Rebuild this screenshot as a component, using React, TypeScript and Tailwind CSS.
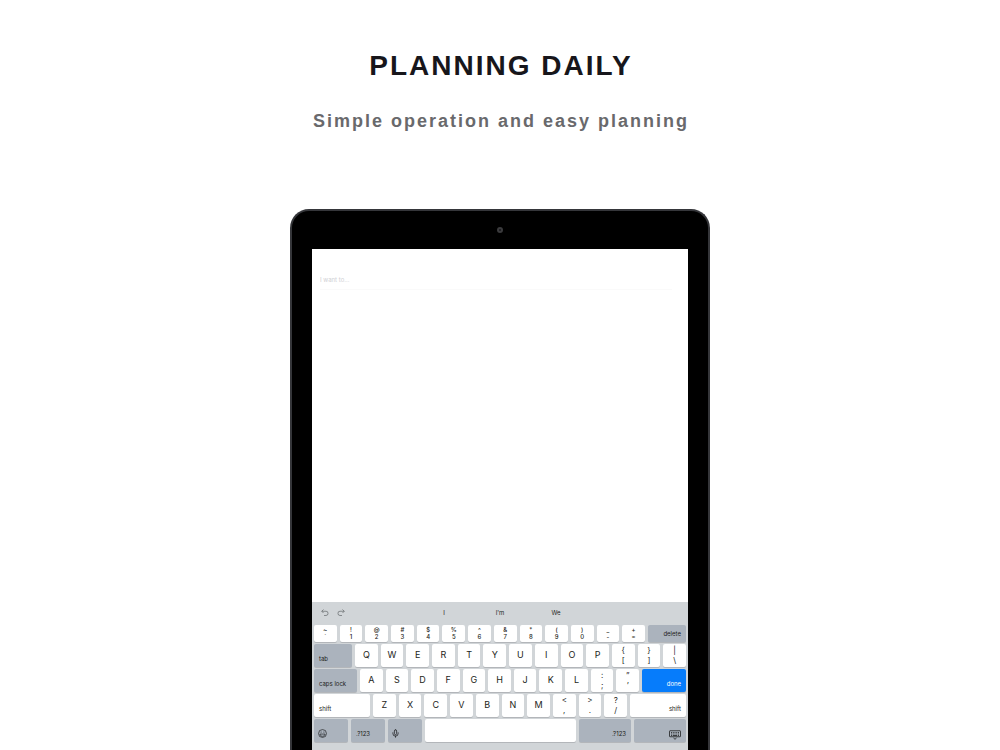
import type { ReactNode } from "react";
import { Mic } from "lucide-react";

type KeyProps = {
  label: string;
  children?: ReactNode;
  className?: string;
};

const LIGHT = "bg-white";
const GRAY = "bg-[#abb3bd]";

function Key({ label, children, className = "" }: KeyProps) {
  return (
    <button
      type="button"
      aria-label={label}
      className={`flex h-full rounded-[2px] shadow-[0_1px_0_#b3b6ba] ${className}`}
    >
      {children}
    </button>
  );
}

function LetterKey({ letter }: { letter: string }) {
  return (
    <Key
      label={letter}
      className={`min-w-0 flex-1 items-center justify-center pb-[2px] text-[9px] ${LIGHT}`}
    >
      {letter}
    </Key>
  );
}

function DualKey({ top, bottom, small = false }: { top: string; bottom: string; small?: boolean }) {
  return (
    <Key
      label={`${top} ${bottom}`}
      className={`min-w-0 flex-1 flex-col items-center justify-center pb-[2px] ${LIGHT} ${
        small ? "text-[6px] font-medium leading-[7px]" : "text-[8px] leading-[10px]"
      }`}
    >
      <span>{top}</span>
      <span>{bottom}</span>
    </Key>
  );
}

function WordKey({ word, className }: { word: string; className: string }) {
  return (
    <Key label={word} className={`shrink-0 items-end px-[5px] pb-1 text-[6px] leading-[8px] ${className}`}>
      {word}
    </Key>
  );
}

function Row({ children, className = "h-[23px]" }: { children: ReactNode; className?: string }) {
  return <div className={`flex gap-[3px] ${className}`}>{children}</div>;
}

function UndoIcon() {
  return (
    <svg viewBox="0 0 16 16" className="size-2" fill="none" stroke="currentColor" strokeWidth="1.4">
      <path d="M5 1 1.5 4.5 5 8M1.5 4.5H10a4 4 0 0 1 4 4.5 4 4 0 0 1-4 4H6" />
    </svg>
  );
}

function SmileyIcon() {
  return (
    <svg viewBox="0 0 16 16" className="size-[9px]" fill="none" stroke="currentColor" strokeWidth="1.2">
      <circle cx="8" cy="8" r="7" />
      <path d="M3.5 9h9c-.4 2.6-2.2 4-4.5 4s-4.1-1.4-4.5-4z" />
      <path d="M5.5 4.5v2M10.5 4.5v2" />
    </svg>
  );
}

function HideKeyboardIcon() {
  return (
    <svg viewBox="0 0 24 20" className="h-[10px] w-3" fill="none" stroke="currentColor" strokeWidth="1.6">
      <rect x="1" y="1.5" width="22" height="12" rx="1" />
      <path d="M4 5h16M4 8h16" strokeDasharray="2 1.5" />
      <path d="M4 11h2M7.5 11h9M18 11h2M9 16l3 2.5 3-2.5" />
    </svg>
  );
}

const symbols = [
  ["~", "`"],
  ["!", "1"],
  ["@", "2"],
  ["#", "3"],
  ["$", "4"],
  ["%", "5"],
  ["^", "6"],
  ["&", "7"],
  ["*", "8"],
  ["(", "9"],
  [")", "0"],
  ["_", "-"],
  ["+", "="],
];

function Keyboard() {
  return (
    <div className="bg-[#d1d5d8] px-[2px] pb-4 text-[#1d1e20]">
      <div className="grid h-[23px] grid-cols-[1fr_168px_1fr] items-center pb-[2px] text-[6px]">
        <div className="flex gap-2 pl-[7px] text-[#64686c]">
          <button type="button" aria-label="Undo">
            <UndoIcon />
          </button>
          <button type="button" aria-label="Redo" className="-scale-x-100">
            <UndoIcon />
          </button>
        </div>
        <div className="grid grid-cols-3 text-center">
          <button type="button">I</button>
          <button type="button">I'm</button>
          <button type="button">We</button>
        </div>
      </div>

      <div className="flex flex-col gap-[2px]">
        <Row className="h-[17px]">
          {symbols.map(([top, bottom]) => (
            <DualKey key={bottom} top={top} bottom={bottom} small />
          ))}
          <WordKey word="delete" className={`w-[38px] justify-end ${GRAY}`} />
        </Row>

        <Row>
          <WordKey word="tab" className={`w-[38px] justify-start ${GRAY}`} />
          {"QWERTYUIOP".split("").map((c) => (
            <LetterKey key={c} letter={c} />
          ))}
          <DualKey top="{" bottom="[" />
          <DualKey top="}" bottom="]" />
          <DualKey top="|" bottom="\" />
        </Row>

        <Row>
          <WordKey word="caps lock" className={`w-[43px] justify-start ${GRAY}`} />
          {"ASDFGHJKL".split("").map((c) => (
            <LetterKey key={c} letter={c} />
          ))}
          <DualKey top=":" bottom=";" />
          <DualKey top="”" bottom="’" />
          <WordKey word="done" className="w-11 justify-end bg-[#067cfb] text-white" />
        </Row>

        <Row>
          <WordKey word="shift" className={`w-14 justify-start ${LIGHT}`} />
          {"ZXCVBNM".split("").map((c) => (
            <LetterKey key={c} letter={c} />
          ))}
          <DualKey top="<" bottom="," />
          <DualKey top=">" bottom="." />
          <DualKey top="?" bottom="/" />
          <WordKey word="shift" className={`w-14 justify-end ${LIGHT}`} />
        </Row>

        <Row>
          <Key label="Emoji" className={`w-[34px] items-end px-1 pb-1 ${GRAY}`}>
            <SmileyIcon />
          </Key>
          <WordKey word=".?123" className={`w-[34px] justify-start ${GRAY}`} />
          <Key label="Dictate" className={`w-[34px] items-end px-[3px] pb-1 ${GRAY}`}>
            <Mic className="size-[9px]" strokeWidth={2} />
          </Key>
          <Key label="Space" className={`flex-1 ${LIGHT}`} />
          <WordKey word=".?123" className={`w-[52px] justify-end ${GRAY}`} />
          <Key label="Hide keyboard" className={`w-[52px] items-end justify-end px-[5px] pb-[2px] ${GRAY}`}>
            <HideKeyboardIcon />
          </Key>
        </Row>
      </div>
    </div>
  );
}

function Tablet() {
  return (
    <div className="w-full max-w-[420px] rounded-t-[19px] border-2 border-b-0 border-[#35363a] bg-black px-5">
      <div className="flex h-[38px] items-center justify-center">
        <div className="grid size-[6px] place-items-center rounded-full bg-[#3b3b3d]">
          <div className="size-[2px] rounded-full bg-[#17171b]" />
        </div>
      </div>
      <div className="bg-white">
        <div className="h-[353px] pt-[21px] pr-4 pl-2">
          <input
            type="text"
            aria-label="Plan"
            placeholder="I want to..."
            className="block h-5 w-full border-b border-[#fafafa] text-[6px] outline-none placeholder:text-[#d0d0d4]"
          />
        </div>
        <Keyboard />
      </div>
    </div>
  );
}

export default function App() {
  return (
    <main className="flex h-screen flex-col items-center overflow-hidden bg-white font-['Inter','Liberation_Sans',sans-serif]">
      <header className="pt-12 pl-[2px] text-center font-['Liberation_Sans',Arial,sans-serif] font-bold">
        <h1 className="text-[28px] leading-9 tracking-[2px] text-[#17161b]">PLANNING DAILY</h1>
        <p className="mt-[25px] text-lg leading-6 tracking-[2px] text-[#69696c]">
          Simple operation and easy planning
        </p>
      </header>
      <section className="flex w-full justify-center pt-[76px]">
        <Tablet />
      </section>
    </main>
  );
}
